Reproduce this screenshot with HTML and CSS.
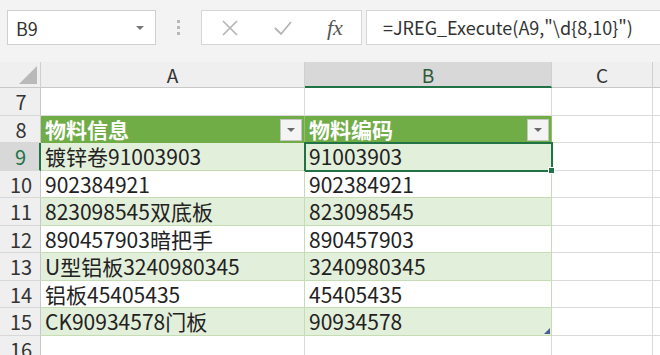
FILE: index.html
```html
<!DOCTYPE html>
<html lang="zh-CN">
<head>
  <meta charset="UTF-8" />
  <title>JREG_Execute</title>
  <link rel="stylesheet" href="styles.css">
</head>
<body>
  <div class="toolbar">
    <div class="namebox">
      <span>B9</span>
      <span class="caret"></span>
    </div>
    <div class="grip"><i></i><i></i><i></i></div>
    <div class="formula">
      <div class="btns">
        <svg class="ico" width="18" height="18" viewBox="0 0 18 18"><path d="M2 2L16 16M16 2L2 16" stroke="#b4b4b4" stroke-width="1.6" fill="none"/></svg>
        <svg class="ico" width="20" height="18" viewBox="0 0 20 18"><path d="M2 9L8 15L18 3" stroke="#b4b4b4" stroke-width="1.8" fill="none"/></svg>
        <span class="fx">fx</span>
      </div>
      <div class="input">=JREG_Execute(A9,"\d{8,10}")</div>
    </div>
  </div>

  <div class="sheet">
    <div class="corner"><span></span></div>
    <div class="colhead">A</div>
    <div class="colhead sel">B</div>
    <div class="colhead">C</div>
    <div class="colhead last"></div>

    <div class="rowhead">7</div>
    <div class="cell"></div>
    <div class="cell"></div>
    <div class="cell"></div>
    <div class="cell last"></div>

    <div class="rowhead">8</div>
    <div class="cell th">物料信息<span class="filter"></span></div>
    <div class="cell th">物料编码<span class="filter"></span></div>
    <div class="cell"></div>
    <div class="cell last"></div>

    <div class="rowhead sel">9</div>
    <div class="cell band">镀锌卷91003903</div>
    <div class="cell band active">91003903<span class="handle"></span></div>
    <div class="cell"></div>
    <div class="cell last"></div>

    <div class="rowhead">10</div>
    <div class="cell td">902384921</div>
    <div class="cell td">902384921</div>
    <div class="cell"></div>
    <div class="cell last"></div>

    <div class="rowhead">11</div>
    <div class="cell band">823098545双底板</div>
    <div class="cell band">823098545</div>
    <div class="cell"></div>
    <div class="cell last"></div>

    <div class="rowhead">12</div>
    <div class="cell td">890457903暗把手</div>
    <div class="cell td">890457903</div>
    <div class="cell"></div>
    <div class="cell last"></div>

    <div class="rowhead">13</div>
    <div class="cell band">U型铝板3240980345</div>
    <div class="cell band">3240980345</div>
    <div class="cell"></div>
    <div class="cell last"></div>

    <div class="rowhead">14</div>
    <div class="cell td">铝板45405435</div>
    <div class="cell td">45405435</div>
    <div class="cell"></div>
    <div class="cell last"></div>

    <div class="rowhead">15</div>
    <div class="cell band">CK90934578门板</div>
    <div class="cell band end">90934578<span class="resize"></span></div>
    <div class="cell"></div>
    <div class="cell last"></div>

    <div class="rowhead">16</div>
    <div class="cell"></div>
    <div class="cell"></div>
    <div class="cell"></div>
    <div class="cell last"></div>
  </div>
</body>
</html>
```

FILE: styles.css
```css
* {
  box-sizing: border-box;
}

body {
  margin: 0;
  width: 660px;
  height: 355px;
  overflow: hidden;
  background: #f3f3f3;
  font-family: "Noto Sans CJK SC", "Noto Sans", sans-serif;
  color: #222;
}

.toolbar {
  display: flex;
  align-items: center;
  height: 62px;
  padding: 0 0 7px 7px;
}

.namebox {
  width: 149px;
  height: 35px;
  background: #fff;
  border: 1px solid #cfcfcf;
  display: flex;
  align-items: center;
  justify-content: space-between;
  padding: 0 11px 0 8px;
  font-size: 18px;
  color: #333;
}

.caret {
  width: 0;
  height: 0;
  border-left: 4px solid transparent;
  border-right: 4px solid transparent;
  border-top: 4px solid #777;
}

.grip {
  width: 45px;
  display: flex;
  flex-direction: column;
  align-items: center;
  gap: 3px;
}

.grip i {
  width: 3px;
  height: 3px;
  background: #b8b8b8;
}

.formula {
  flex: 1;
  height: 35px;
  display: flex;
}

.btns {
  width: 161px;
  background: #fff;
  border: 1px solid #d6d6d6;
  display: flex;
  align-items: center;
  padding-left: 19px;
  gap: 34px;
}

.fx {
  font-family: "Liberation Serif", serif;
  font-style: italic;
  font-size: 22px;
  color: #555;
  margin-left: 0;
}

.input {
  flex: 1;
  margin-left: 4px;
  background: #fff;
  border: 1px solid #d6d6d6;
  border-right: none;
  font-size: 18px;
  line-height: 33px;
  padding-left: 16px;
  color: #333;
  white-space: nowrap;
}

.sheet {
  display: grid;
  grid-template-columns: 41px 264px 247px 101px 1fr;
  grid-template-rows: 26px repeat(9, 27.5px) 1fr;
  height: 293px;
  background: #fff;
}

.corner {
  background: #efefef;
  border-right: 1px solid #d0d0d0;
  border-bottom: 1px solid #c8c8c8;
  position: relative;
}

.corner span {
  position: absolute;
  right: 3px;
  bottom: 3px;
  width: 0;
  height: 0;
  border-left: 18px solid transparent;
  border-bottom: 18px solid #b9b9b9;
}

.colhead {
  background: #efefef;
  border-right: 1px solid #d0d0d0;
  border-bottom: 1px solid #c8c8c8;
  text-align: center;
  font-size: 19px;
  line-height: 26px;
  color: #333;
}

.colhead.sel {
  background: #d8d8d8;
  border-bottom: 2px solid #217346;
  color: #2e5a3a;
}

.colhead.last,
.cell.last {
  border-right: none;
}

.rowhead {
  background: #efefef;
  border-right: 1px solid #c8c8c8;
  border-bottom: 1px solid #d8d8d8;
  text-align: center;
  font-size: 20px;
  line-height: 27px;
  color: #333;
  padding-left: 2px;
}

.rowhead.sel {
  background: #d8d8d8;
  color: #217346;
  border-right: 2px solid #217346;
}

.cell {
  position: relative;
  border-right: 1px solid #dadada;
  border-bottom: 1px solid #dadada;
  font-size: 21px;
  line-height: 27px;
  padding-left: 4px;
  white-space: nowrap;
}

.cell.th {
  background: #70ad47;
  color: #fff;
  font-weight: bold;
  border-right-color: #8fc06a;
  border-bottom-color: #70ad47;
}

.cell.band {
  background: #e2efda;
  border-bottom-color: #c5dcb5;
  border-right-color: #c5dcb5;
}

.cell.td {
  border-bottom-color: #c5dcb5;
  border-right-color: #c5dcb5;
}

.filter {
  position: absolute;
  right: 2px;
  top: 3px;
  width: 22px;
  height: 22px;
  background: #f4f4f4;
  border: 1px solid #c4c4c4;
}

.filter::after {
  content: "";
  position: absolute;
  left: 6px;
  top: 8px;
  border-left: 4px solid transparent;
  border-right: 4px solid transparent;
  border-top: 4px solid #6a6a6a;
}

.active {
  outline: 2px solid #217346;
  outline-offset: -1px;
}

.handle {
  position: absolute;
  right: -4px;
  bottom: -4px;
  width: 7px;
  height: 7px;
  background: #217346;
  border: 1px solid #fff;
  z-index: 2;
}

.resize {
  position: absolute;
  right: 1px;
  bottom: 1px;
  width: 0;
  height: 0;
  border-left: 6px solid transparent;
  border-bottom: 6px solid #4a5a9a;
}
```
